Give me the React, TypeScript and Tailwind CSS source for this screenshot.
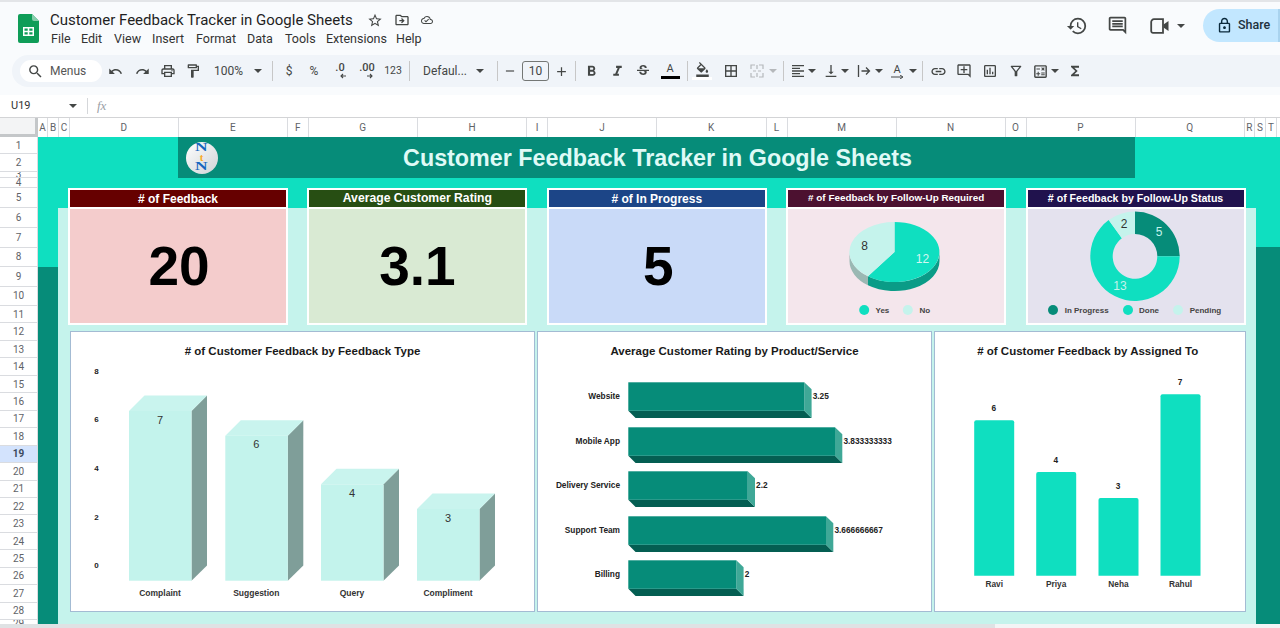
import React from "react";
import {
  MdSearch, MdUndo, MdRedo, MdOutlinePrint, MdOutlineFormatPaint, MdFormatBold, MdFormatItalic, MdStrikethroughS,
  MdFormatColorFill, MdBorderAll, MdFormatAlignLeft, MdVerticalAlignBottom, MdLink, MdOutlineAddComment,
  MdOutlineInsertChart, MdOutlineFilterAlt, MdOutlineCalculate, MdFunctions, MdHistory, MdOutlineComment,
  MdOutlineLock, MdOutlineStarBorder, MdOutlineDriveFileMove, MdOutlineCloudDone, MdAdd, MdRemove,
} from "react-icons/md";

const Caret = ({ c = "#444746" }: { c?: string }) => (
  <svg width="8" height="4" viewBox="0 0 8 4" className="shrink-0"><path d="M0 0h8L4 4z" fill={c} /></svg>
);
const Slot = ({ c, children }: { c: string; children: React.ReactNode }) => (
  <div className={`flex items-center justify-center shrink-0 ${c}`}>{children}</div>
);
const Sep = ({ c = "" }: { c?: string }) => <div className={`w-px h-[20px] bg-[#c7c7c7] shrink-0 ${c}`} />;

const SheetsLogo = () => (
  <svg width="21" height="29" viewBox="0 0 21 29">
    <path d="M2 0h12l7 7v20a2 2 0 0 1-2 2H2a2 2 0 0 1-2-2V2a2 2 0 0 1 2-2z" fill="#0f9d58" />
    <path d="M14 0l7 7h-5a2 2 0 0 1-2-2z" fill="#87ceac" />
    <path d="M5 13h11v9H5z M6.5 14.5v2.2h3.2v-2.2z M11.3 14.5v2.2h3.2v-2.2z M6.5 18.3v2.2h3.2v-2.2z M11.3 18.3v2.2h3.2v-2.2z" fill="#fff" fillRule="evenodd" />
  </svg>
);

const TopBar = () => (
  <div className="flex h-[53px] shrink-0 items-start">
    <div className="ml-[17.5px] mt-[12px] w-[32.5px]"><SheetsLogo /></div>
    <div className="flex flex-col">
      <div className="flex items-center h-[22px] mt-[7px]">
        <span className="w-[317px] shrink-0 whitespace-nowrap text-[15px] text-[#1f1f1f] font-['Roboto']">Customer Feedback Tracker in Google Sheets</span>
        <Slot c="w-[16px]"><MdOutlineStarBorder size={17} color="#444746" /></Slot>
        <Slot c="w-[38px]"><MdOutlineDriveFileMove size={16} color="#444746" /></Slot>
        <Slot c="w-[12px]"><MdOutlineCloudDone size={16} color="#444746" /></Slot>
      </div>
      <div className="flex items-center h-[16px] text-[12.5px] text-[#333] font-['Roboto']">
        <span className="w-[31px] pl-px">File</span>
        <span className="w-[33px]">Edit</span>
        <span className="w-[38px]">View</span>
        <span className="w-[44px]">Insert</span>
        <span className="w-[51px]">Format</span>
        <span className="w-[38px]">Data</span>
        <span className="w-[41px]">Tools</span>
        <span className="w-[70px]">Extensions</span>
        <span>Help</span>
      </div>
    </div>
    <div className="ml-auto flex items-center h-[33px] mt-[7px]">
      <Slot c="w-[40px]"><MdHistory size={22} color="#444746" /></Slot>
      <Slot c="w-[40px]"><MdOutlineComment size={21} color="#444746" /></Slot>
      <Slot c="w-[36px] ml-[5px]">
        <svg width="20" height="16" viewBox="0 0 20 16" fill="none">
          <path d="M4 1.2h9v13.6H3A1.8 1.8 0 0 1 1.2 13V4A2.8 2.8 0 0 1 4 1.2z" stroke="#444746" strokeWidth="1.8" />
          <path d="M13.5 6.5L18.5 3v10l-5-3.5z" fill="#444746" />
        </svg>
      </Slot>
      <Slot c="w-[6px]"><Caret /></Slot>
      <div className="ml-[19px] w-[77px] h-[33px] rounded-l-full bg-[#c2e7ff] flex items-center pl-[13px] border-r-2 border-[#a9d3ee]">
        <MdOutlineLock size={17} color="#0b2a3c" />
        <span className="ml-[5px] text-[12.5px] font-medium text-[#20313c] font-['Roboto']">Share</span>
      </div>
    </div>
  </div>
);

const ic = "#444746";
const Decimal = ({ label, dir }: { label: string; dir: "left" | "right" }) => (
  <div className="flex flex-col items-center leading-none">
    <span className="text-[11px] font-medium leading-[10px]">{label}</span>
    <svg width="18" height="6" viewBox="0 0 18 6" fill="none" stroke="#444746" strokeWidth="1.1">
      {dir === "left" ? <path d="M15 3H10M12 1L10 3l2 2" /> : <path d="M9 3h5M12 1l2 2-2 2" />}
    </svg>
  </div>
);
const Toolbar = () => (
  <div className="ml-[12px] h-[32px] shrink-0 rounded-l-full bg-[#f0f4f9] flex items-center pl-[8px] text-[#444746] text-[12px] font-['Roboto']">
    <div className="w-[82px] h-[22px] bg-white rounded-full flex items-center pl-[7px] shrink-0">
      <MdSearch size={17} color={ic} />
      <span className="ml-[6px] text-[#555]">Menus</span>
    </div>
    <Slot c="w-[27px]"><MdUndo size={15} /></Slot>
    <Slot c="w-[26px]"><MdRedo size={15} /></Slot>
    <Slot c="w-[25px]"><MdOutlinePrint size={16} /></Slot>
    <Slot c="w-[26px]"><MdOutlineFormatPaint size={16} /></Slot>
    <span className="ml-[8px] w-[30px] shrink-0">100%</span>
    <Slot c="w-[28px]"><Caret /></Slot>
    <Sep />
    <Slot c="w-[32px]">$</Slot>
    <Slot c="w-[18px]">%</Slot>
    <Slot c="w-[34px]"><Decimal label=".0" dir="left" /></Slot>
    <Slot c="w-[20px]"><Decimal label=".00" dir="right" /></Slot>
    <Slot c="w-[32px]"><span className="text-[10.5px]">123</span></Slot>
    <Sep />
    <span className="ml-[13px] w-[44px] shrink-0">Defaul...</span>
    <Slot c="w-[26px]"><Caret /></Slot>
    <Sep c="ml-[4px]" />
    <Slot c="w-[23px]"><MdRemove size={14} /></Slot>
    <div className="ml-px w-[27px] h-[20px] border border-[#747775] rounded-[3px] flex items-center justify-center shrink-0">10</div>
    <Slot c="w-[24px]"><MdAdd size={15} /></Slot>
    <Sep c="ml-[2px]" />
    <Slot c="w-[30px]"><MdFormatBold size={17} /></Slot>
    <Slot c="w-[22px]"><MdFormatItalic size={17} /></Slot>
    <Slot c="w-[30px]"><MdStrikethroughS size={16} /></Slot>
    <Slot c="w-[24px]">
      <div className="flex flex-col items-center w-[19px]">
        <span className="text-[11px] leading-[12px]">A</span>
        <div className="w-[19px] h-[3px] bg-black mt-px" />
      </div>
    </Slot>
    <Sep c="ml-[5px]" />
    <Slot c="w-[28px]">
      <div className="flex flex-col items-center w-[20px]">
        <MdFormatColorFill size={15} />
        <div className="w-[20px] h-[3px] bg-white" />
      </div>
    </Slot>
    <Slot c="w-[30px]"><MdBorderAll size={16} /></Slot>
    <Slot c="w-[22px]">
      <svg width="14" height="14" viewBox="0 0 14 14" fill="none" stroke="#b5b8bb" strokeWidth="1.2">
        <path d="M1 5V1h4M9 1h4v4M1 9v4h4M9 13h4V9M7 1v4M7 9v4M3 7h3M8 7h3" />
      </svg>
    </Slot>
    <Slot c="w-[10px]"><Caret c="#b5b8bb" /></Slot>
    <Sep c="ml-[5px]" />
    <Slot c="w-[22px] ml-[3px]"><MdFormatAlignLeft size={16} /></Slot>
    <Slot c="w-[6px]"><Caret /></Slot>
    <Slot c="w-[24px] ml-[4px]"><MdVerticalAlignBottom size={16} /></Slot>
    <Slot c="w-[4px]"><Caret /></Slot>
    <Slot c="w-[24px] ml-[5px]">
      <svg width="14" height="14" viewBox="0 0 14 14" fill="none" stroke="#444746" strokeWidth="1.3">
        <path d="M1.5 1v12M4.5 7h8M9 3.5L12.5 7 9 10.5" />
      </svg>
    </Slot>
    <Slot c="w-[6px]"><Caret /></Slot>
    <Slot c="w-[26px] ml-[2px]">
      <div className="flex flex-col items-center w-[13px]">
        <span className="text-[11px] leading-[11px]">A</span>
        <svg width="13" height="4" viewBox="0 0 13 4"><path d="M0 2h11M9 0l3 2-3 2" fill="none" stroke="#444746" strokeWidth="1" /></svg>
      </div>
    </Slot>
    <Slot c="w-[6px]"><Caret /></Slot>
    <Sep c="ml-[6px]" />
    <Slot c="w-[30px]"><MdLink size={17} /></Slot>
    <Slot c="w-[22px]"><MdOutlineAddComment size={16} /></Slot>
    <Slot c="w-[30px]"><MdOutlineInsertChart size={16} /></Slot>
    <Slot c="w-[22px]"><MdOutlineFilterAlt size={16} /></Slot>
    <Slot c="w-[26px]"><MdOutlineCalculate size={17} /></Slot>
    <Slot c="w-[4px]"><Caret /></Slot>
    <Slot c="w-[26px] ml-[5px]"><MdFunctions size={16} /></Slot>
  </div>
);

const FormulaBar = () => (
  <div className="h-[22px] mt-[8px] shrink-0 flex items-center font-['Roboto'] text-[11px] text-[#333] bg-white">
    <span className="ml-[11px] w-[58px]">U19</span>
    <Slot c="w-[8px]"><Caret /></Slot>
    <div className="ml-[10px] w-px h-[16px] bg-[#d5d7da]" />
    <span className="ml-[9px] font-['Liberation_Serif'] italic text-[13px] text-[#9aa0a6]">fx</span>
  </div>
);

const columns = ["A", "B", "C", "D", "E", "F", "G", "H", "I", "J", "K", "L", "M", "N", "O", "P", "Q", "R", "S", "T"];
const ColHeaders = () => (
  <div className="h-[20px] shrink-0 grid grid-cols-[38px_10px_11px_11px_108.5px_109.5px_20.5px_109.5px_109px_21px_109px_109.5px_21px_109px_109px_21px_109px_109.2px_10.3px_11px_11px_3px] border-t border-[#d3d4d6] bg-white text-[10px] text-[#5f6368] font-['Roboto']">
    <div className="bg-[#f3f4f5] border-r-[3px] border-b-[3px] border-[#c4c7c9]" />
    {columns.map((c) => (
      <div key={c} className="flex items-center justify-center border-r border-[#dadce0]">{c}</div>
    ))}
    <div />
  </div>
);

const rows = Array.from({ length: 29 }, (_, i) => i + 1);
const RowHeaders = () => (
  <div className="w-[38px] shrink-0 overflow-hidden bg-white grid grid-rows-[17px_18px_6px_10px_20px_20px_19.5px_19.5px_19.5px_19.5px_17px_18px_repeat(16,17.45px)_8px] text-[10px] text-[#5f6368] font-['Roboto'] border-r border-[#dadce0]">
    {rows.map((r) =>
      r === 19 ? (
        <div key={r} className="flex items-center justify-center bg-[#d3e3fd] font-bold text-[#3c4a5e] border-b border-[#dadce0]">{r}</div>
      ) : (
        <div key={r} className="flex items-center justify-center overflow-hidden border-b border-[#dadce0]">{r}</div>
      )
    )}
  </div>
);

const Logo = () => (
  <div className="ml-[7.5px] w-[32px] h-[32px] rounded-full bg-gradient-to-br from-white to-[#cfd3d6] shrink-0 flex flex-col items-center justify-center font-['Liberation_Serif'] font-bold leading-[9.5px]">
    <span className="inline-block scale-x-[1.45] text-[12px] text-[#1565c0]">N</span>
    <span className="text-[11px] text-[#f9a825]">t</span>
    <span className="inline-block scale-x-[1.45] text-[12px] text-[#1565c0]">N</span>
  </div>
);

const KpiCard = ({ title, value, head, body, size }: { title: string; value: string; head: string; body: string; size: string }) => (
  <div className="w-[220px] h-[136.5px] border-2 border-white flex flex-col shrink-0">
    <div className={`h-[19px] border-b-2 border-white flex items-center justify-center font-bold text-white shrink-0 ${head} ${size}`}>{title}</div>
    <div className={`flex-1 flex items-center justify-center text-[55px] font-bold text-black leading-none pt-[2px] ${body}`}>{value}</div>
  </div>
);

const LegendText = ({ x, y, children }: { x: number; y: number; children: string }) => (
  <text x={x} y={y} className="text-[8px] font-bold fill-[#444]" dominantBaseline="central">{children}</text>
);

const PieCard = () => (
  <div className="w-[220px] h-[136.5px] border-2 border-white flex flex-col shrink-0">
    <div className="h-[19px] border-b-2 border-white flex items-center justify-center font-bold text-white text-[9.9px] bg-[#4c1130] shrink-0">
      # of Feedback by Follow-Up Required
    </div>
    <div className="flex-1 bg-[#f4e6ec]">
      <svg viewBox="788.5 209 216 113.5" className="w-full h-full block">
        <path d="M940 252A45 30 0 0 1 868.5 276.3L868.5 285.3A45 30 0 0 0 940 261Z" fill="#0a9c87" />
        <path d="M868.5 276.3A45 30 0 0 1 850 252L850 261A45 30 0 0 0 868.5 285.3Z" fill="#9ab8b3" />
        <path d="M895 252L895 222A45 30 0 1 1 868.5 276.3Z" fill="#0fdfc0" />
        <path d="M895 252L868.5 276.3A45 30 0 0 1 895 222Z" fill="#c5f3ec" />
        <text x="865" y="245.5" textAnchor="middle" dominantBaseline="central" className="text-[12px] fill-[#333]">8</text>
        <text x="923" y="259" textAnchor="middle" dominantBaseline="central" className="text-[12px] fill-[#d5f7f2]">12</text>
        <circle cx="864.7" cy="310" r="5" fill="#0fdfc0" />
        <LegendText x={876} y={310}>Yes</LegendText>
        <circle cx="908.3" cy="310" r="5" fill="#c5f3ec" />
        <LegendText x={920} y={310}>No</LegendText>
      </svg>
    </div>
  </div>
);

const DonutCard = () => (
  <div className="w-[220px] h-[136.5px] border-2 border-white flex flex-col shrink-0">
    <div className="h-[19px] border-b-2 border-white flex items-center justify-center font-bold text-white text-[10.6px] bg-[#20124d] shrink-0">
      # of Feedback by Follow-Up Status
    </div>
    <div className="flex-1 bg-[#e4e2ee]">
      <svg viewBox="1028 209 216 113.5" className="w-full h-full block">
        <path d="M1135 211.6A44.7 44.7 0 0 1 1179.7 256.3H1157.3A22.3 22.3 0 0 0 1135 234Z" fill="#068c79" />
        <path d="M1179.7 256.3A44.7 44.7 0 1 1 1108.7 220.1L1121.9 238.3A22.3 22.3 0 1 0 1157.3 256.3Z" fill="#0fdfc0" />
        <path d="M1108.7 220.1A44.7 44.7 0 0 1 1135 211.6V234A22.3 22.3 0 0 0 1121.9 238.3Z" fill="#c5f3ec" />
        <text x="1159" y="231.5" textAnchor="middle" dominantBaseline="central" className="text-[12px] fill-[#c5f3ec]">5</text>
        <text x="1120" y="285.5" textAnchor="middle" dominantBaseline="central" className="text-[12px] fill-[#c5f3ec]">13</text>
        <text x="1124" y="223.5" textAnchor="middle" dominantBaseline="central" className="text-[12px] fill-[#333]">2</text>
        <circle cx="1053" cy="310" r="5" fill="#068c79" />
        <LegendText x={1064.7} y={310}>In Progress</LegendText>
        <circle cx="1128" cy="310" r="5" fill="#0fdfc0" />
        <LegendText x={1139} y={310}>Done</LegendText>
        <circle cx="1178" cy="310" r="5" fill="#c5f3ec" />
        <LegendText x={1189.7} y={310}>Pending</LegendText>
      </svg>
    </div>
  </div>
);

const ChartCard = ({ title, viewBox, titleClass = "", children }: { title: string; viewBox: string; titleClass?: string; children: React.ReactNode }) => (
  <div className="bg-white border border-[#a3bbd3] flex flex-col h-[281px] min-w-0">
    <div className={`h-[38px] shrink-0 pt-[2px] flex items-center justify-center text-[11.5px] font-bold text-[#1a1a1a] ${titleClass}`}>{title}</div>
    <svg viewBox={viewBox} className="w-full flex-1 min-h-0 block overflow-visible">{children}</svg>
  </div>
);

const columnBars = [
  { x: 129, top: 411, v: "7", name: "Complaint" },
  { x: 225.3, top: 435.7, v: "6", name: "Suggestion" },
  { x: 321, top: 484.3, v: "4", name: "Query" },
  { x: 417, top: 509, v: "3", name: "Compliment" },
];
const FeedbackType = () => (
  <ChartCard title="# of Customer Feedback by Feedback Type" viewBox="71 370 463 241">
    {[["8", 371], ["6", 419], ["4", 468], ["2", 517], ["0", 565]].map(([t, y]) => (
      <text key={t} x="96.5" y={y} textAnchor="middle" dominantBaseline="central" className="text-[8px] font-bold fill-[#222]">{t}</text>
    ))}
    {columnBars.map((b) => {
      const r = b.x + 62.5;
      return (
        <g key={b.name}>
          <path d={`M${r} ${b.top}l15.5 -15.5V565.5L${r} 580.7Z`} fill="#7f9e99" />
          <path d={`M${b.x} ${b.top}l15.5 -15.5H${r + 15.5}L${r} ${b.top}Z`} fill="#c9f4ee" />
          <rect x={b.x} y={b.top} width="62.5" height={580.7 - b.top} fill="#c3f3ec" />
          <text x={b.x + 31} y={b.top + 8.5} textAnchor="middle" dominantBaseline="central" className="text-[11px] fill-[#333]">{b.v}</text>
          <text x={b.x + 31} y="593" textAnchor="middle" dominantBaseline="central" className="text-[8.5px] font-bold fill-[#333]">{b.name}</text>
        </g>
      );
    })}
  </ChartCard>
);

const hBars = [
  { name: "Website", r: 804.3, t: 382.3, v: "3.25" },
  { name: "Mobile App", r: 835, t: 427.3, v: "3.833333333" },
  { name: "Delivery Service", r: 747.7, t: 471.3, v: "2.2" },
  { name: "Support Team", r: 826, t: 516.3, v: "3.666666667" },
  { name: "Billing", r: 736.3, t: 560.3, v: "2" },
];
const RatingChart = () => (
  <ChartCard title="Average Customer Rating by Product/Service" viewBox="538 370 393 241">
    {hBars.map((b) => {
      const h = 28.5;
      const cy = b.t + 13.5;
      return (
        <g key={b.name}>
          <path d={`M628.3 ${b.t + h}l7.3 7.3H${b.r + 7.3}L${b.r} ${b.t + h}Z`} fill="#045e52" />
          <path d={`M${b.r} ${b.t}l7.3 7V${b.t + h + 7.3}L${b.r} ${b.t + h}Z`} fill="#3fa897" />
          <rect x="628.3" y={b.t} width={b.r - 628.3} height={h} fill="#068c79" />
          <text x="620" y={cy} textAnchor="end" dominantBaseline="central" className="text-[8.3px] font-bold fill-[#222]">{b.name}</text>
          <text x={b.r + 8.4} y={cy} dominantBaseline="central" className="text-[8.3px] font-bold fill-[#222]">{b.v}</text>
        </g>
      );
    })}
  </ChartCard>
);

const people = [
  { name: "Ravi", x: 974.7, top: 420.3, v: "6" },
  { name: "Priya", x: 1036.7, top: 472, v: "4" },
  { name: "Neha", x: 1099, top: 498, v: "3" },
  { name: "Rahul", x: 1161, top: 394.3, v: "7" },
];
const AssignedChart = () => (
  <ChartCard title="# of Customer Feedback by Assigned To" titleClass="pr-[4px]" viewBox="935.5 370 309.5 241">
    {people.map((p) => (
      <g key={p.name}>
        <path d={`M${p.x} 575.7V${p.top + 2}a2 2 0 0 1 2 -2H${p.x + 38}a2 2 0 0 1 2 2V575.7Z`} fill="#0fdfc0" />
        <text x={p.x + 19.5} y={p.top - 12.5} textAnchor="middle" dominantBaseline="central" className="text-[8.3px] font-bold fill-[#222]">{p.v}</text>
        <text x={p.x + 20} y="583.5" textAnchor="middle" dominantBaseline="central" className="text-[8.3px] font-bold fill-[#333]">{p.name}</text>
      </g>
    ))}
  </ChartCard>
);

const Canvas = () => (
  <div className="flex-1 min-w-0 bg-[#0fdfc0] grid grid-cols-[20px_120px_957px_121px_1fr] grid-rows-[41px_30px_39px_19.5px_1fr]">
    <div className="col-start-1 row-start-5 bg-[#068c79]" />
    <div className="col-start-5 row-start-4 row-span-2 bg-[#068c79]" />
    <div className="col-start-2 col-span-3 row-start-3 row-span-3 bg-[#c5f3ec]" />
    <div className="col-start-3 row-start-1 bg-[#068c79] flex items-center">
      <Logo />
      <div className="flex-1 text-center pr-[37.5px] pt-[2px] text-[23.3px] font-bold text-[#dffaf6]">Customer Feedback Tracker in Google Sheets</div>
    </div>
    <div className="col-start-2 col-span-3 row-start-2 row-span-4 z-10 pt-[10px] pl-[10px] flex flex-col">
      <div className="flex gap-[19.4px]">
        <KpiCard title="# of Feedback" value="20" head="bg-[#660000]" body="bg-[#f4cccc] pl-[2px]" size="text-[12px]" />
        <KpiCard title="Average Customer Rating" value="3.1" head="bg-[#274e13]" body="bg-[#d9ead3]" size="text-[12.2px]" />
        <KpiCard title="# of In Progress" value="5" head="bg-[#1c4587]" body="bg-[#c9daf8] pl-[3px]" size="text-[12px]" />
        <PieCard />
        <DonutCard />
      </div>
      <div className="ml-[2px] mt-[6.5px] grid grid-cols-[465px_395px_311.5px] gap-x-[2px]">
        <FeedbackType />
        <RatingChart />
        <AssignedChart />
      </div>
    </div>
  </div>
);

export default function App() {
  return (
    <div className="w-[1280px] h-[628px] overflow-hidden bg-[#f9fbfd] flex flex-col font-['Liberation_Sans',sans-serif] border-t-2 border-[#e3e5e8]">
      <TopBar />
      <Toolbar />
      <FormulaBar />
      <ColHeaders />
      <div className="flex-1 min-h-0 flex flex-col">
        <div className="flex-1 min-h-0 flex">
          <RowHeaders />
          <Canvas />
        </div>
        <div className="h-[4px] shrink-0 flex bg-[#f3f4f5]">
          <div className="w-[995px] bg-[#dfe2e4]" />
        </div>
      </div>
    </div>
  );
}
